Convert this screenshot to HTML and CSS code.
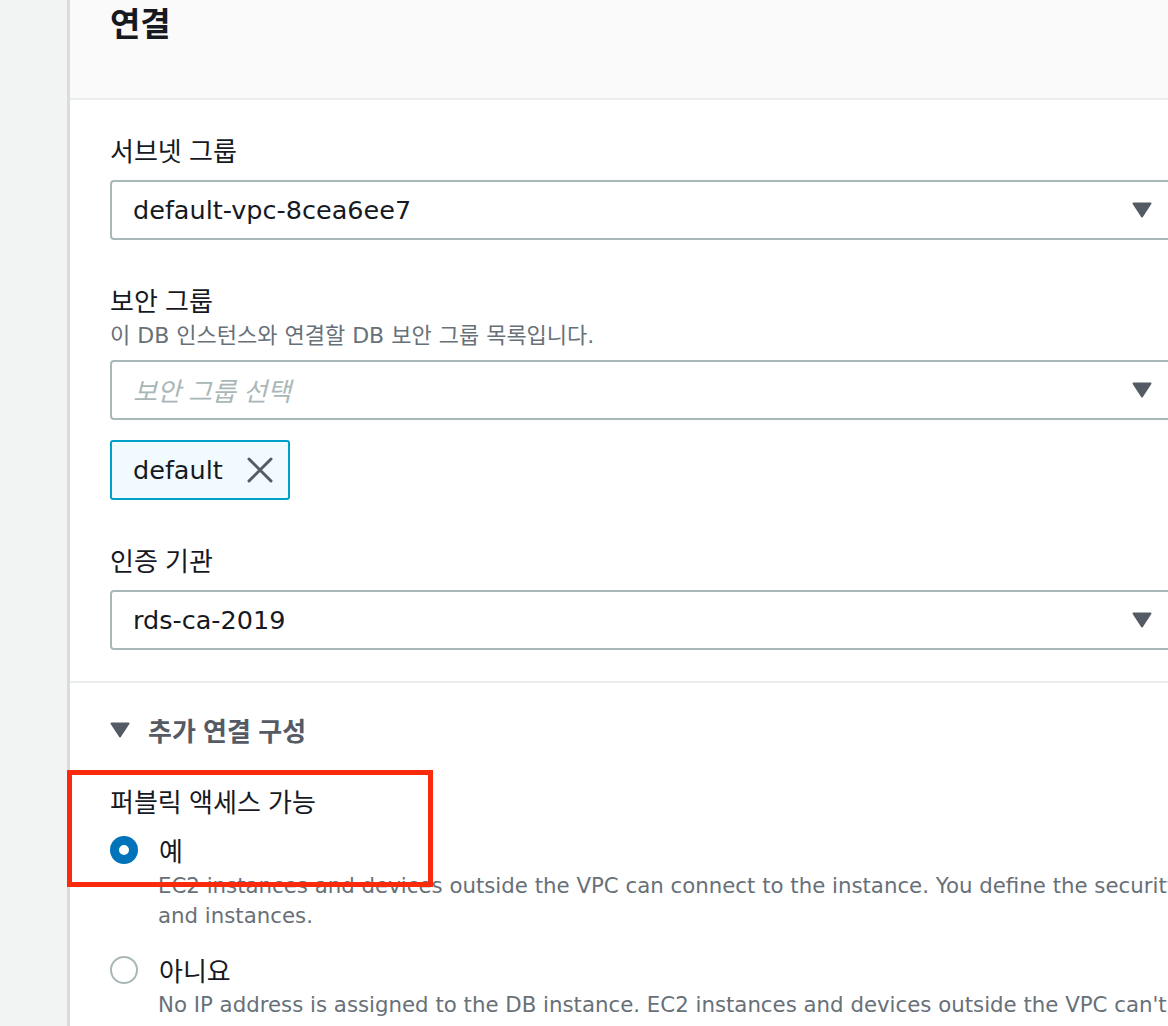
FILE: index.html
```html
<!DOCTYPE html>
<html lang="ko">
<head>
<meta charset="utf-8">
<title>연결</title>
<link rel="stylesheet" href="styles.css">
</head>
<body>
<div class="page">
  <div class="gutter"></div>
  <div class="panel">
    <div class="panel-header">
      <h2 class="title">연결</h2>
    </div>
    <div class="section">
      <div class="label label-first">서브넷 그룹</div>
      <div class="select">
        <span class="select-value">default-vpc-8cea6ee7</span>
        <svg class="caret" width="20" height="16" viewBox="0 0 20 16"><path d="M1.5 1.5 H18.5 L10 14.5 Z" fill="#545b64" stroke="#545b64" stroke-width="2" stroke-linejoin="round"/></svg>
      </div>

      <div class="label label-gap">보안 그룹</div>
      <div class="desc">이 DB 인스턴스와 연결할 DB 보안 그룹 목록입니다.</div>
      <div class="select select-tight">
        <span class="select-placeholder">보안 그룹 선택</span>
        <svg class="caret" width="20" height="16" viewBox="0 0 20 16"><path d="M1.5 1.5 H18.5 L10 14.5 Z" fill="#545b64" stroke="#545b64" stroke-width="2" stroke-linejoin="round"/></svg>
      </div>
      <div class="token">
        <span class="token-text">default</span>
        <svg class="token-x" width="26" height="26" viewBox="0 0 26 26"><path d="M2 2 L24 24 M24 2 L2 24" stroke="#545b64" stroke-width="3" stroke-linecap="round"/></svg>
      </div>

      <div class="label label-gap">인증 기관</div>
      <div class="select">
        <span class="select-value">rds-ca-2019</span>
        <svg class="caret" width="20" height="16" viewBox="0 0 20 16"><path d="M1.5 1.5 H18.5 L10 14.5 Z" fill="#545b64" stroke="#545b64" stroke-width="2" stroke-linejoin="round"/></svg>
      </div>
    </div>

    <div class="section section-divided">
      <div class="expander">
        <svg class="expander-caret" width="20" height="16" viewBox="0 0 20 16"><path d="M1.5 1.5 H18.5 L10 14.5 Z" fill="#545b64" stroke="#545b64" stroke-width="2" stroke-linejoin="round"/></svg>
        <span>추가 연결 구성</span>
      </div>

      <div class="label label-public">퍼블릭 액세스 가능</div>
      <div class="radio-row">
        <span class="radio radio-on"></span>
        <span class="radio-label">예</span>
      </div>
      <div class="radio-desc">
        <div class="line">EC2 instances and devices outside the VPC can connect to the instance. You define the security groups that specify which EC2 instances</div>
        <div class="line">and instances.</div>
      </div>
      <div class="radio-row radio-row-gap">
        <span class="radio"></span>
        <span class="radio-label">아니요</span>
      </div>
      <div class="radio-desc radio-desc-tight">
        <div class="line">No IP address is assigned to the DB instance. EC2 instances and devices outside the VPC can't connect.</div>
      </div>

      <div class="highlight"></div>
    </div>
  </div>
</div>
</body>
</html>
```

FILE: styles.css
```css
html, body {
  margin: 0;
  padding: 0;
  background: #ffffff;
  overflow: hidden;
}

body {
  font-family: "DejaVu Sans", "Noto Sans CJK KR", sans-serif;
  color: #16191f;
}

.page {
  display: flex;
  width: 1400px;
  height: 1026px;
}

.gutter {
  flex: 0 0 67px;
  background: #f2f3f3;
  border-right: 3px solid #d9dcdc;
}

.panel {
  flex: 1 1 auto;
  background: #ffffff;
  position: relative;
}

.panel-header {
  height: 97px;
  background: #fafafa;
  border-bottom: 2px solid #eaeded;
  padding-left: 40px;
  padding-top: 1px;
}

.title {
  margin: 0;
  font-size: 33px;
  font-weight: 700;
  line-height: 42px;
  font-family: "Noto Sans CJK KR", sans-serif;
}

.section {
  padding-left: 40px;
  padding-bottom: 31px;
  position: relative;
}

.section-divided {
  border-top: 2px solid #eaeded;
  padding-top: 30px;
}

.label {
  font-size: 26px;
  line-height: 34px;
  font-family: "Noto Sans CJK KR", sans-serif;
}

.label-first {
  padding-top: 33px;
}

.label-gap {
  margin-top: 43px;
}

.desc {
  margin-top: 5px;
  font-size: 22px;
  line-height: 28px;
  color: #687078;
  font-family: "DejaVu Sans", "Noto Sans CJK KR", sans-serif;
}

.select {
  margin-top: 13px;
  width: 1080px;
  height: 60px;
  box-sizing: border-box;
  border: 2px solid #aab7b8;
  border-radius: 4px;
  display: flex;
  align-items: center;
  padding-left: 21px;
  padding-right: 36px;
}

.select-tight {
  margin-top: 10px;
}

.select-value {
  flex: 1 1 auto;
  font-size: 25.5px;
  line-height: 34px;
}

.select-placeholder {
  flex: 1 1 auto;
  font-size: 26px;
  line-height: 34px;
  font-style: italic;
  color: #aab7b8;
  font-family: "Noto Sans CJK KR", sans-serif;
}

.caret {
  flex: 0 0 auto;
  display: block;
}

.token {
  margin-top: 20px;
  display: inline-flex;
  align-items: center;
  height: 60px;
  box-sizing: border-box;
  padding: 0 15px 0 21px;
  background: #f1faff;
  border: 2px solid #00a1c9;
  border-radius: 3px;
  gap: 24px;
}

.token-text {
  font-size: 25.5px;
  line-height: 34px;
}

.token-x {
  display: block;
}

.expander {
  display: flex;
  align-items: center;
  gap: 18px;
  font-size: 26px;
  line-height: 34px;
  font-weight: 700;
  color: #545b64;
  font-family: "Noto Sans CJK KR", sans-serif;
}

.expander-caret {
  display: block;
}

.label-public {
  margin-top: 37px;
}

.radio-row {
  margin-top: 15px;
  display: flex;
  align-items: center;
  gap: 21px;
}

.radio-row-gap {
  margin-top: 22px;
}

.radio {
  width: 24px;
  height: 24px;
  border: 2px solid #aab7b8;
  border-radius: 50%;
  background: #ffffff;
  flex: 0 0 auto;
}

.radio-on {
  width: 10px;
  height: 10px;
  border: 9px solid #0073bb;
}

.radio-label {
  font-size: 26px;
  line-height: 34px;
  font-family: "Noto Sans CJK KR", sans-serif;
}

.radio-desc {
  margin-top: 4px;
  margin-left: 48px;
  font-size: 21.3px;
  line-height: 30px;
  color: #687078;
}

.radio-desc-tight {
  margin-top: 3px;
}

.line {
  white-space: nowrap;
}

.highlight {
  position: absolute;
  left: -3px;
  top: 87px;
  width: 356px;
  height: 107px;
  border: 5px solid #fa2a0a;
}
```
